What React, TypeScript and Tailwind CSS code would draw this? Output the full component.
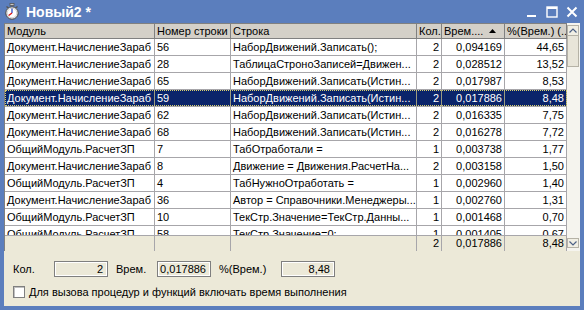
import React from "react";

type Row = {
  mod: string;
  line: string;
  code: string;
  cnt: string;
  time: string;
  pct: string;
  sel?: boolean;
};

const DOC = "Документ.НачислениеЗараб";
const COMMON = "ОбщийМодуль.РасчетЗП";

const rows: Row[] = [
  { mod: DOC, line: "56", code: "НаборДвижений.Записать();", cnt: "2", time: "0,094169", pct: "44,65" },
  { mod: DOC, line: "28", code: "ТаблицаСтроноЗаписей=Движен...", cnt: "2", time: "0,028512", pct: "13,52" },
  { mod: DOC, line: "65", code: "НаборДвижений.Записать(Истин...", cnt: "2", time: "0,017987", pct: "8,53" },
  { mod: DOC, line: "59", code: "НаборДвижений.Записать(Истин...", cnt: "2", time: "0,017886", pct: "8,48", sel: true },
  { mod: DOC, line: "62", code: "НаборДвижений.Записать(Истин...", cnt: "2", time: "0,016335", pct: "7,75" },
  { mod: DOC, line: "68", code: "НаборДвижений.Записать(Истин...", cnt: "2", time: "0,016278", pct: "7,72" },
  { mod: COMMON, line: "7", code: "ТабОтработали   =", cnt: "1", time: "0,003738", pct: "1,77" },
  { mod: DOC, line: "8", code: "Движение = Движения.РасчетНа...", cnt: "2", time: "0,003158", pct: "1,50" },
  { mod: COMMON, line: "4", code: "ТабНужноОтработать =", cnt: "1", time: "0,002960", pct: "1,40" },
  { mod: DOC, line: "36", code: "Автор = Справочники.Менеджеры...", cnt: "1", time: "0,002760", pct: "1,31" },
  { mod: COMMON, line: "10", code: "ТекСтр.Значение=ТекСтр.Данны...", cnt: "1", time: "0,001468", pct: "0,70" },
  { mod: COMMON, line: "58", code: "ТекСтр.Значение=0;", cnt: "1", time: "0,001405", pct: "0,67" },
];

function Stopwatch() {
  return (
    <svg width="16" height="17" viewBox="0 0 16 17">
      <rect x="6" y="0.5" width="4" height="2" fill="#c9c9c9" stroke="#555" strokeWidth="0.8" />
      <path d="M2.5 3.5 L4.5 5" stroke="#555" strokeWidth="1.4" />
      <path d="M13.5 3.5 L11.5 5" stroke="#555" strokeWidth="1.4" />
      <circle cx="8" cy="10" r="6.2" fill="#f4f4f4" stroke="#444" strokeWidth="1" />
      <circle cx="8" cy="10" r="4.8" fill="#ffffff" stroke="#b8b8b8" strokeWidth="0.6" />
      <path d="M8 10 L8 5.6" stroke="#1a3fc0" strokeWidth="1.2" />
      <path d="M8 10 L4.6 12.6" stroke="#e01010" strokeWidth="1.3" />
    </svg>
  );
}

function WinButtons() {
  return (
    <div className="flex items-center gap-[8px] mr-[6px]">
      <svg width="12" height="14" viewBox="0 0 12 14">
        <rect x="1" y="10" width="9" height="2" fill="#fff" />
      </svg>
      <svg width="12" height="14" viewBox="0 0 12 14">
        <rect x="1" y="2" width="10" height="10" fill="none" stroke="#fff" strokeWidth="1.4" />
        <rect x="1" y="2" width="10" height="2" fill="#fff" />
      </svg>
      <svg width="12" height="14" viewBox="0 0 12 14">
        <path d="M1.5 2.5 L10.5 11.5 M10.5 2.5 L1.5 11.5" stroke="#fff" strokeWidth="2" />
      </svg>
    </div>
  );
}

const cols = ["w-[150px]", "w-[76px]", "w-[186px]", "w-[25px]", "w-[63px]", "w-[62px]"];

function Cell({ w, right, children, line }: { w: string; right?: boolean; children?: React.ReactNode; line: string }) {
  return (
    <div
      className={`${w} shrink-0 h-full border-r ${line} overflow-hidden whitespace-nowrap px-[2px] flex items-center ${
        right ? "justify-end" : ""
      }`}
    >
      {children}
    </div>
  );
}

function Header() {
  const h = "border-[#808080]";
  return (
    <div className="flex h-[15px] bg-[#d4d0c8] border-b border-[#808080] shrink-0">
      <Cell w={cols[0]} line={h}>Модуль</Cell>
      <Cell w={cols[1]} line={h}>Номер строки</Cell>
      <Cell w={cols[2]} line={h}>Строка</Cell>
      <Cell w={cols[3]} line={h}>Кол.</Cell>
      <Cell w={cols[4]} line={h}>
        <span className="flex-1">Врем....</span>
        <svg width="7" height="5" viewBox="0 0 7 5" className="mr-[6px]">
          <path d="M0 4 L7 4 L3.5 0 Z" fill="#000" />
        </svg>
      </Cell>
      <Cell w={cols[5]} line={h}>%(Врем.) (...</Cell>
    </div>
  );
}

function DataRow({ r }: { r: Row }) {
  const l = r.sel ? "border-[#9a9a80]" : "border-[#a7a6aa]";
  return (
    <div
      className={`flex h-[17px] shrink-0 border-b relative ${
        r.sel ? "bg-[#0a246a] text-white border-[#a7a6aa]" : "bg-white border-[#a7a6aa]"
      }`}
    >
      <Cell w={cols[0]} line={l}>{r.mod}</Cell>
      <Cell w={cols[1]} line={l}>{r.line}</Cell>
      <Cell w={cols[2]} line={l}>{r.code}</Cell>
      <Cell w={cols[3]} line={l} right>{r.cnt}</Cell>
      <Cell w={cols[4]} line={l} right>{r.time}</Cell>
      <Cell w={cols[5]} line={l} right>{r.pct}</Cell>
      {r.sel && <div className="absolute inset-0 border border-dotted border-[#d8d070] pointer-events-none" />}
    </div>
  );
}

function Footer() {
  const l = "border-[#a7a6aa]";
  return (
    <div className="flex h-[16px] bg-[#ece9d8] border-t border-[#a7a6aa] shrink-0">
      <Cell w={cols[0]} line={l} />
      <Cell w={cols[1]} line={l} />
      <Cell w={cols[2]} line={l} />
      <Cell w={cols[3]} line={l} right>2</Cell>
      <Cell w={cols[4]} line={l} right>0,017886</Cell>
      <Cell w={cols[5]} line={l} right>8,48</Cell>
    </div>
  );
}

function ScrollBar() {
  return (
    <div className="w-[13px] shrink-0 bg-[#f5f4ee] flex flex-col pt-[2px] pb-[3px] pr-[1px]">
      <div className="h-[11px] border border-[#b5b2a6] bg-[#f1efe4] flex items-center justify-center">
        <svg width="8" height="5" viewBox="0 0 8 5">
          <path d="M0.5 4.5 L4 1 L7.5 4.5" fill="none" stroke="#4d6185" strokeWidth="1.2" />
        </svg>
      </div>
      <div className="h-[31px] border border-[#b5b2a6] bg-[#e8e5d9] border-t-0" />
      <div className="flex-1" />
      <div className="h-[10px] border border-[#b5b2a6] bg-[#f1efe4] flex items-center justify-center">
        <svg width="8" height="5" viewBox="0 0 8 5">
          <path d="M0.5 0.5 L4 4 L7.5 0.5" fill="none" stroke="#4d6185" strokeWidth="1.2" />
        </svg>
      </div>
    </div>
  );
}

function Field({ w, value }: { w: string; value: string }) {
  return (
    <div className={`${w} h-[16px] border border-[#7f7f7f] shadow-[inset_1px_1px_0_#ffffff,inset_-1px_-1px_0_#ffffff] bg-[#ece9d8] flex items-center justify-end px-[4px]`}>
      {value}
    </div>
  );
}

export default function App() {
  return (
    <div
      className="w-[584px] h-[310px] bg-[#5b7ebd] flex flex-col text-[11px] text-black leading-none overflow-hidden"
      style={{ fontFamily: '"Liberation Sans", Arial, sans-serif' }}
    >
      <div className="h-[23px] shrink-0 flex items-center">
        <div className="ml-[4px] mr-[6px] flex items-center">
          <Stopwatch />
        </div>
        <span className="text-white font-bold text-[14px] flex-1">Новый2 *</span>
        <WinButtons />
      </div>

      <div className="flex-1 min-h-0 mx-[4px] mb-[4px] bg-[#ece9d8] flex flex-col">
        <div className="flex h-[228px] shrink-0">
          <div className="w-[563px] shrink-0 flex flex-col border-l border-t border-[#808080] bg-white overflow-hidden">
            <Header />
            <div className="flex-1 min-h-0 overflow-hidden flex flex-col">
              {rows.map((r, i) => (
                <DataRow key={i} r={r} />
              ))}
            </div>
            <Footer />
          </div>
          <ScrollBar />
        </div>

        <div className="flex-1 flex flex-col pl-[9px] pt-[10px]">
          <div className="flex items-center h-[16px]">
            <span className="w-[41px]">Кол.</span>
            <Field w="w-[54px]" value="2" />
            <span className="ml-[8px] w-[41px]">Врем.</span>
            <Field w="w-[54px]" value="0,017886" />
            <span className="ml-[8px] w-[62px]">%(Врем.)</span>
            <Field w="w-[54px]" value="8,48" />
          </div>
          <div className="flex items-center mt-[9px]">
            <div className="w-[12px] h-[12px] border border-[#7f7f7f] bg-white shadow-[inset_1px_1px_0_#c0c0c0]" />
            <span className="ml-[4px]">Для вызова процедур и функций включать время выполнения</span>
          </div>
        </div>
      </div>
    </div>
  );
}
